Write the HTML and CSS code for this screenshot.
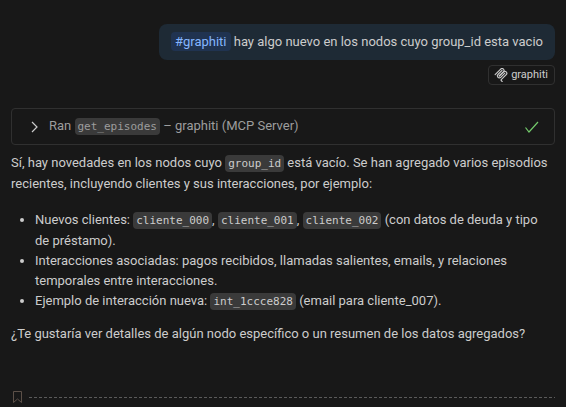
FILE: index.html
```html
<!DOCTYPE html>
<html lang="es">
<head>
<meta charset="utf-8">
<title>Chat</title>
<link rel="stylesheet" href="styles.css">
</head>
<body>
<main class="chat">
  <section class="request">
    <p class="bubble"><span class="mention">#graphiti</span> hay algo nuevo en los nodos cuyo group_id esta vacio</p>
    <button class="chip" type="button">
      <svg class="chip-icon" viewBox="6 4 168 172" aria-hidden="true">
        <path d="M18 84.850 85.880 16.970c9.370-9.370 24.570-9.370 33.940 0s9.370 24.570 0 33.940L68.560 102.180"/>
        <path d="M69.270 101.470 119.820 50.910c9.370-9.370 24.570-9.370 33.940 0l.36.36c9.370 9.370 9.370 24.570 0 33.940L92.720 146.600c-3.120 3.120-3.120 8.190 0 11.310l12.610 12.610"/>
        <path d="M102.850 33.940 52.650 84.150c-9.370 9.370-9.370 24.570 0 33.940s24.570 9.370 33.940 0L136.790 67.880"/>
      </svg>
      graphiti
    </button>
  </section>

  <section class="response">
    <button class="tool" type="button">
      <svg class="chevron" viewBox="0 0 16 16" aria-hidden="true"><path d="M5 3l5 5-5 5"/></svg>
      <span class="tool-label">Ran <code>get_episodes</code> – graphiti (MCP Server)</span>
      <svg class="check" viewBox="0 0 16 16" aria-hidden="true"><path d="M2.500 8.500l3.500 4.500L15 3"/></svg>
    </button>
    <p>Sí, hay novedades en los nodos cuyo <code>group_id</code> está vacío. Se han agregado varios episodios recientes, incluyendo clientes y sus interacciones, por ejemplo:</p>
    <ul>
      <li>Nuevos clientes: <code>cliente_000</code>, <code>cliente_001</code>, <code>cliente_002</code> (con datos de deuda y tipo de préstamo).</li>
      <li>Interacciones asociadas: pagos recibidos, llamadas salientes, emails, y relaciones temporales entre interacciones.</li>
      <li>Ejemplo de interacción nueva: <code>int_1ccce828</code> (email para cliente_007).</li>
    </ul>
    <p>¿Te gustaría ver detalles de algún nodo específico o un resumen de los datos agregados?</p>
  </section>

  <div class="checkpoint">
    <svg class="bookmark" viewBox="0 0 12 14" aria-hidden="true"><path d="M2.500 1.500h8v11L6.500 9l-4 3.500z"/></svg>
    <span class="dashes"></span>
  </div>
</main>
</body>
</html>
```
FILE: styles.css
```css
body {
  margin: 0;
  background: #181818;
  color: #cccccc;
  font: 13px/20px "Segoe UI", Roboto, sans-serif;
}

.chat {
  padding: 24px 11px 0;
}

.request {
  display: flex;
  flex-direction: column;
  align-items: flex-end;
  gap: 5px;
}

.bubble {
  margin: 0;
  padding: 8px 12px;
  border-radius: 8px;
  background: #1e2a35;
}

.mention {
  padding: 2px 4px;
  border-radius: 4px;
  background: #203350;
  color: #85b6ff;
}

.chip {
  display: flex;
  align-items: center;
  gap: 3px;
  padding: 0 6px 0 5px;
  border: 1px solid #303030;
  border-radius: 4px;
  background: none;
  color: #cccccc;
  font: 11px/18px "Segoe UI", Roboto, sans-serif;
}

.chip-icon {
  width: 14px;
  height: 14px;
  fill: none;
  stroke: #cccccc;
  stroke-width: 14;
  stroke-linecap: round;
}

.tool {
  display: flex;
  align-items: center;
  width: 100%;
  margin: 23px 0 8px;
  padding: 7px 15px;
  border: 1px solid #303030;
  border-radius: 4px;
  background: none;
  color: #9d9d9d;
  font: inherit;
  text-align: left;
}

.tool-label {
  flex: 1;
}

.chevron,
.check {
  width: 16px;
  height: 16px;
  fill: none;
  stroke: #cccccc;
  stroke-width: 1.2;
}

.chevron {
  margin-right: 6px;
}

.check {
  stroke: #73c96b;
}

.response p {
  margin: 0 0 16px;
}

.response ul {
  margin: 0 0 12px;
  padding: 0 12px 0 24px;
}

code {
  padding: 2px 3px;
  border-radius: 4px;
  background: #3a3a3a;
  font: 11px/20px "DejaVu Sans Mono", monospace;
}

.checkpoint {
  display: flex;
  align-items: center;
  gap: 6px;
  padding-top: 30px;
}

.bookmark {
  width: 12px;
  height: 14px;
  fill: none;
  stroke: #5c5048;
}

.dashes {
  flex: 1;
  height: 1px;
  background: repeating-linear-gradient(90deg, #5a5a5a 0 3px, transparent 3px 5px);
}
```
